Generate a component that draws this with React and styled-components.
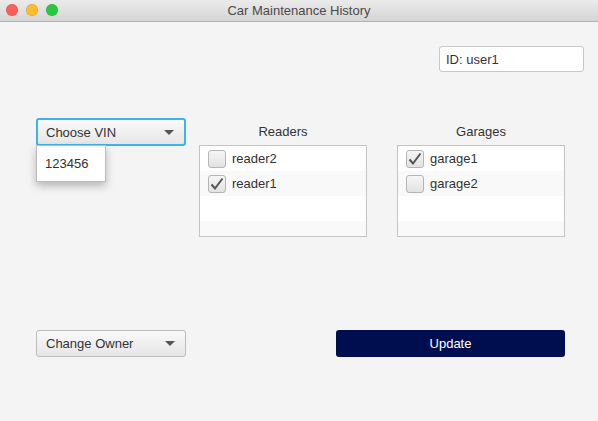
import React from "react"
import styled, { createGlobalStyle } from "styled-components"

const GlobalStyle = createGlobalStyle`
  html, body { margin: 0; padding: 0; }
  body {
    width: 598px;
    height: 421px;
    overflow: hidden;
    background: #f4f4f4;
    font-family: "Liberation Sans", Arial, sans-serif;
    font-size: 13px;
    color: #333;
  }
`

const Window = styled.div`
  width: 598px;
  height: 421px;
  display: flex;
  flex-direction: column;
  background: #f4f4f4;
`

const TitleBar = styled.div`
  height: 21px;
  flex: none;
  position: relative;
  display: flex;
  align-items: center;
  justify-content: center;
  background: linear-gradient(#ebebeb, #d5d5d5);
  border-bottom: 1px solid #b1b1b1;
  font-size: 13px;
  color: #4a4a4a;
`

const Lights = styled.div`
  position: absolute;
  left: 6px;
  top: 4px;
  display: flex;
  gap: 8px;
`

const Light = styled.span`
  width: 12px;
  height: 12px;
  border-radius: 50%;
  background: ${p => p.$color};
  box-shadow: inset 0 0 0 0.5px rgba(0, 0, 0, 0.15);
`

const Content = styled.div`
  flex: 1;
  display: flex;
  flex-direction: column;
  padding: 24px 14px 0 36px;
`

const TopRow = styled.div`
  display: flex;
  justify-content: flex-end;
`

const IdField = styled.div`
  width: 131px;
  height: 24px;
  padding: 0 6px;
  display: flex;
  align-items: center;
  background: #fff;
  border: 1px solid #c8c8c8;
  border-radius: 3px;
  color: #333;
`

const MiddleRow = styled.div`
  margin-top: 46px;
  display: flex;
  align-items: flex-start;
`

const ComboWrap = styled.div`
  position: relative;
  width: 150px;
  margin-right: 13px;
`

const Combo = styled.div`
  box-sizing: border-box;
  width: 150px;
  height: ${p => (p.$focused ? 28 : 27)}px;
  padding: 0 10px 0 ${p => (p.$focused ? 8 : 9)}px;
  display: flex;
  align-items: center;
  justify-content: space-between;
  background: linear-gradient(#f9f9f9, #e6e6e6);
  border: ${p => (p.$focused ? "2px solid #3ab4ea" : "1px solid #bcbcbc")};
  border-radius: 3px;
  color: #333;
`

const Arrow = styled.span`
  width: 0;
  height: 0;
  border-left: 5px solid transparent;
  border-right: 5px solid transparent;
  border-top: 5px solid #555;
`

const Popup = styled.div`
  position: absolute;
  left: 0;
  top: 27px;
  width: 70px;
  height: 37px;
  padding-left: 8px;
  box-sizing: border-box;
  display: flex;
  align-items: center;
  background: #fff;
  border: 1px solid #bdbdbd;
  box-shadow: 0 4px 8px rgba(0, 0, 0, 0.25);
`

const ListColumn = styled.div`
  width: 168px;
  display: flex;
  flex-direction: column;
  margin-right: ${p => p.$gap || 0}px;
`

const ListTitle = styled.div`
  height: 27px;
  display: flex;
  align-items: center;
  justify-content: center;
  color: #333;
`

const ListBox = styled.div`
  box-sizing: border-box;
  height: 92px;
  border: 1px solid #c4c4c4;
  background: #fff;
  overflow: hidden;
`

const Row = styled.div`
  height: 25px;
  display: flex;
  align-items: center;
  padding-left: 8px;
  gap: 6px;
  background: ${p => (p.$odd ? "#f9f9f9" : "#fff")};
`

const Box = styled.span`
  box-sizing: border-box;
  width: 18px;
  height: 18px;
  border: 1px solid #b5b5b5;
  border-radius: 3px;
  background: linear-gradient(#f6f6f6, #e2e2e2);
  display: flex;
  align-items: center;
  justify-content: center;
`

const BottomRow = styled.div`
  margin-top: 93px;
  display: flex;
  justify-content: space-between;
  align-items: flex-start;
`

const UpdateButton = styled.button`
  width: 229px;
  height: 27px;
  margin-right: 19px;
  border: none;
  border-radius: 3px;
  background: #000e4f;
  color: #fff;
  font-family: inherit;
  font-size: 13px;
`

const Check = () => (
  <svg width="14" height="14" viewBox="0 0 14 14">
    <path d="M1.5 7.5 L5 11.5 L12.5 1.5" fill="none" stroke="#555" strokeWidth="2" />
  </svg>
)

const CheckList = ({ title, items, gap }) => (
  <ListColumn $gap={gap}>
    <ListTitle>{title}</ListTitle>
    <ListBox>
      {items.map((it, i) => (
        <Row key={i} $odd={i % 2 === 1}>
          {it ? (
            <>
              <Box>{it.checked && <Check />}</Box>
              <span>{it.label}</span>
            </>
          ) : null}
        </Row>
      ))}
    </ListBox>
  </ListColumn>
)

export default function App() {
  return (
    <>
      <GlobalStyle />
      <Window>
        <TitleBar>
          <Lights>
            <Light $color="#fc5f57" />
            <Light $color="#fdbc2e" />
            <Light $color="#28c840" />
          </Lights>
          Car Maintenance History
        </TitleBar>
        <Content>
          <TopRow>
            <IdField>ID: user1</IdField>
          </TopRow>
          <MiddleRow>
            <ComboWrap>
              <Combo $focused>
                <span>Choose VIN</span>
                <Arrow />
              </Combo>
              <Popup>123456</Popup>
            </ComboWrap>
            <CheckList
              title="Readers"
              gap={30}
              items={[
                { label: "reader2", checked: false },
                { label: "reader1", checked: true },
                null,
                null,
              ]}
            />
            <CheckList
              title="Garages"
              items={[
                { label: "garage1", checked: true },
                { label: "garage2", checked: false },
                null,
                null,
              ]}
            />
          </MiddleRow>
          <BottomRow>
            <Combo>
              <span>Change Owner</span>
              <Arrow />
            </Combo>
            <UpdateButton>Update</UpdateButton>
          </BottomRow>
        </Content>
      </Window>
    </>
  )
}
